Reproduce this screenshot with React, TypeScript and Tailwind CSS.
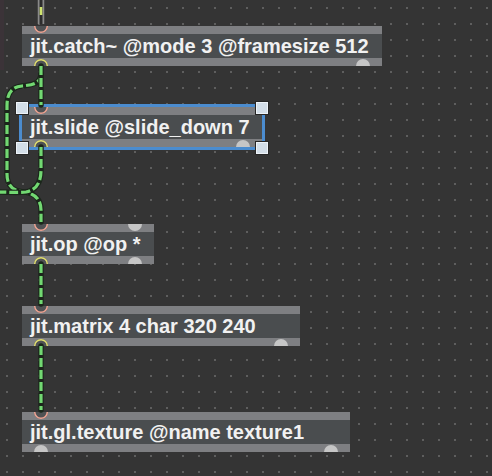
import React from "react";

const FONT = { fontFamily: '"Liberation Sans", Arial, sans-serif' };

function Cord({ d }: { d: string }) {
  return (
    <g>
      <path d={d} fill="none" stroke="#1b261b" strokeWidth={5.5} strokeLinecap="round" />
      <path d={d} fill="none" stroke="#72d872" strokeWidth={3.2} strokeDasharray="9 3" />
    </g>
  );
}

function Inlet({ x, y, kind }: { x: number; y: number; kind: "pink" | "gray" }) {
  const d = `M ${x - 7} ${y} A 7 7 0 0 0 ${x + 7} ${y} Z`;
  if (kind === "gray") return <path d={d} fill="#c6c6c6" />;
  const r = `M ${x - 6.3} ${y} A 6.3 6.3 0 0 0 ${x + 6.3} ${y}`;
  return (
    <g>
      <path d={d} fill="#4f5254" />
      <path d={r} fill="none" stroke="#f0a594" strokeWidth={1.5} />
    </g>
  );
}

function Outlet({ x, y, kind }: { x: number; y: number; kind: "yellow" | "gray" }) {
  const d = `M ${x - 7} ${y} A 7 7 0 0 1 ${x + 7} ${y} Z`;
  if (kind === "gray") return <path d={d} fill="#c6c6c6" />;
  const r = `M ${x - 6.3} ${y} A 6.3 6.3 0 0 1 ${x + 6.3} ${y}`;
  return (
    <g>
      <path d={d} fill="#4f5254" />
      <path d={r} fill="none" stroke="#e3e070" strokeWidth={1.5} />
    </g>
  );
}

function BoxInner({ text }: { text: string }) {
  return (
    <div className="flex flex-col w-full">
      <div className="h-2 bg-[#7e7f82]" />
      <div
        className="h-6 leading-6 px-2 bg-[#4a4d4f] text-[#f1f1f1] text-[20px] font-bold whitespace-nowrap overflow-hidden"
        style={FONT}
      >
        {text}
      </div>
      <div className="h-2 bg-[#7e7f82]" />
    </div>
  );
}

function Handle({ className }: { className: string }) {
  return (
    <div
      className={
        "absolute w-[14px] h-[14px] bg-[#d3dee8] border border-[#262626] shadow-[inset_0_0_0_1px_#eef3f8] " +
        className
      }
    />
  );
}

export default function App() {
  return (
    <div className="relative w-[492px] h-[476px] overflow-hidden bg-[#343434] bg-[radial-gradient(circle,#5e5e5e_1.1px,transparent_1.5px)] [background-size:16px_16px] [background-position:-1px_0px]">
      <div className="absolute left-0 top-0 w-[4px] h-[70px] bg-[#3b3338]" />

      {/* objects (nodes on the patcher canvas) */}
      <div className="absolute left-[22px] top-[26px] w-[360px]">
        <BoxInner text="jit.catch~ @mode 3 @framesize 512" />
      </div>
      <div className="absolute left-[22px] top-[107px] w-[240px] ring-[3px] ring-[#4b8ccf]">
        <BoxInner text="jit.slide @slide_down 7" />
      </div>
      <div className="absolute left-[22px] top-[224px] w-[132px]">
        <BoxInner text="jit.op @op *" />
      </div>
      <div className="absolute left-[22px] top-[306px] w-[278px]">
        <BoxInner text="jit.matrix 4 char 320 240" />
      </div>
      <div className="absolute left-[22px] top-[412px] w-[328px]">
        <BoxInner text="jit.gl.texture @name texture1" />
      </div>

      <svg className="absolute inset-0 pointer-events-none" width={492} height={476} viewBox="0 0 492 476">
        <Inlet x={41} y={26} kind="pink" />
        <Outlet x={41} y={66} kind="yellow" />
        <Outlet x={363} y={66} kind="gray" />

        <Inlet x={41} y={107} kind="pink" />
        <Outlet x={41} y={147} kind="yellow" />
        <Outlet x={243} y={147} kind="gray" />

        <Inlet x={41} y={224} kind="pink" />
        <Inlet x={135} y={224} kind="gray" />
        <Outlet x={41} y={264} kind="yellow" />
        <Outlet x={135} y={264} kind="gray" />

        <Inlet x={41} y={306} kind="pink" />
        <Outlet x={41} y={346} kind="yellow" />
        <Outlet x={281} y={346} kind="gray" />

        <Inlet x={41} y={412} kind="pink" />
        <Outlet x={41} y={452} kind="gray" />
        <Outlet x={331} y={452} kind="gray" />

        <path d="M41,0 L41,24" fill="none" stroke="#8a8a8a" strokeWidth={6.5} />
        <path d="M41,0 L41,24" fill="none" stroke="#2c2c2c" strokeWidth={3} />
        <path d="M41,0 L41,24" fill="none" stroke="#cfe46e" strokeWidth={2.6} strokeDasharray="0 7 8 40" />

        <Cord d="M41,74 C41,84 31,85 22,86 C11,87 7,94 7,106 L7,174 C7,186 13,191 24,192 C35,193 41,200 41,210 L41,222" />
        <Cord d="M41,147 L41,170 C41,183 36,190 26,192 C16,193 8,192 -4,192" />
        <Cord d="M41,66 L41,105" />
        <Cord d="M41,264 L41,304" />
        <Cord d="M41,346 L41,410" />
      </svg>

      <Handle className="left-[15px] top-[101px]" />
      <Handle className="left-[255px] top-[101px]" />
      <Handle className="left-[15px] top-[141px]" />
      <Handle className="left-[255px] top-[141px]" />
    </div>
  );
}
